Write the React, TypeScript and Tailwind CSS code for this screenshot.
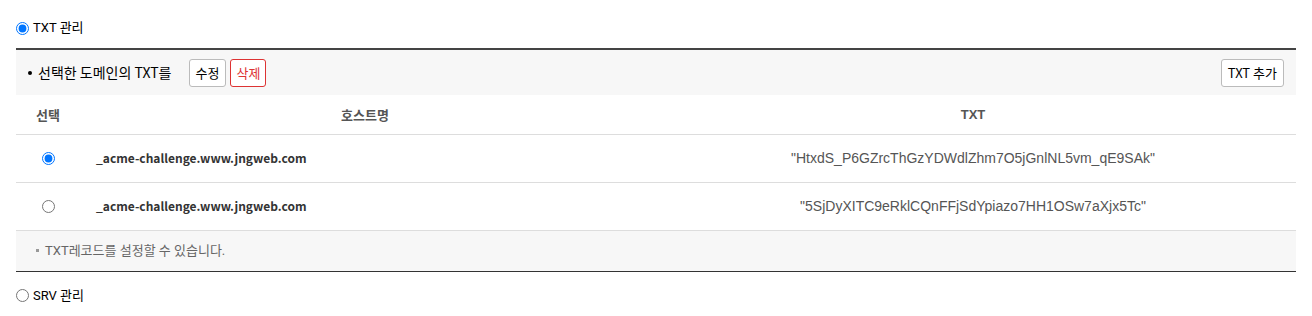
import React, { useState } from 'react';

const records = [
  { host: '_acme-challenge.www.jngweb.com', txt: '"HtxdS_P6GZrcThGzYDWdlZhm7O5jGnlNL5vm_qE9SAk"' },
  { host: '_acme-challenge.www.jngweb.com', txt: '"5SjDyXITC9eRklCQnFFjSdYpiazo7HH1OSw7aXjx5Tc"' },
];

const kr = { fontFamily: 'Roboto, "Noto Sans CJK KR", sans-serif' };
const noto = { fontFamily: '"Noto Sans CJK KR", "Noto Sans", sans-serif' };

export default function App() {
  const [section, setSection] = useState('txt');
  const [selected, setSelected] = useState(0);

  return (
    <div className="w-[1312px] h-[316px] bg-white px-4 text-[#222]" style={kr}>
      <label className="flex items-center h-[48px] pt-[8px] gap-[4px] text-[13px] text-black">
        <input
          type="radio"
          name="section"
          checked={section === 'txt'}
          onChange={() => setSection('txt')}
          className="m-0 w-[13px] h-[13px]"
        />
        TXT 관리
      </label>

      <div className="border-t-2 border-[#444] border-b border-b-[#333]">
        <div className="flex items-center justify-between h-[45px] bg-[#f7f7f7] pl-[12px] pr-[12px]">
          <div className="flex items-center">
            <span className="text-[14px] text-black" style={noto}>
              <span className="inline-block w-[4px] h-[4px] rounded-full bg-black align-middle mr-[6px] mb-[2px]" />
              선택한 도메인의 TXT를
            </span>
            <button className="ml-[17px] h-[28px] px-[6px] border border-[#bbb] rounded-[3px] bg-white text-[13px] text-black" style={noto}>
              수정
            </button>
            <button className="ml-[4px] h-[28px] px-[5px] border border-[#d33] rounded-[3px] bg-white text-[13px] text-[#d33]" style={noto}>
              삭제
            </button>
          </div>
          <button className="h-[28px] px-[6px] border border-[#bbb] rounded-[3px] bg-white text-[13px] text-black" style={noto}>
            TXT 추가
          </button>
        </div>

        <table className="w-full border-collapse">
          <thead>
            <tr className="h-[39px] border-b border-[#ddd]">
              <th className="w-[64px] text-[13px] font-bold text-[#555]" style={noto}>선택</th>
              <th className="w-[570px] text-[13px] font-bold text-[#555]" style={noto}>호스트명</th>
              <th className="text-[13px] font-bold text-[#555]" style={{ fontFamily: '"Liberation Sans", Arial, sans-serif' }}>TXT</th>
            </tr>
          </thead>
          <tbody>
            {records.map((r, i) => (
              <tr key={i} className="h-[48px] border-b border-[#ddd]">
                <td className="text-center">
                  <input
                    type="radio"
                    name="rec"
                    checked={selected === i}
                    onChange={() => setSelected(i)}
                    className="m-0 w-[13px] h-[13px] align-middle"
                  />
                </td>
                <td className="pl-[16px] text-[12px] font-bold text-[#333]" style={noto}>{r.host}</td>
                <td className="text-center text-[14px] text-[#555]" style={{ fontFamily: '"Liberation Sans", Arial, sans-serif' }}>
                  {r.txt}
                </td>
              </tr>
            ))}
          </tbody>
        </table>

        <div className="h-[40px] bg-[#f7f7f7] flex items-center pl-[20px] text-[13px] text-[#666]">
          <span className="inline-block w-[3px] h-[3px] bg-[#999] mr-[6px]" />
          TXT레코드를 설정할 수 있습니다.
        </div>
      </div>

      <label className="flex items-center h-[48px] gap-[4px] text-[13px] text-black">
        <input
          type="radio"
          name="section"
          checked={section === 'srv'}
          onChange={() => setSection('srv')}
          className="m-0 w-[13px] h-[13px]"
        />
        SRV 관리
      </label>
    </div>
  );
}
